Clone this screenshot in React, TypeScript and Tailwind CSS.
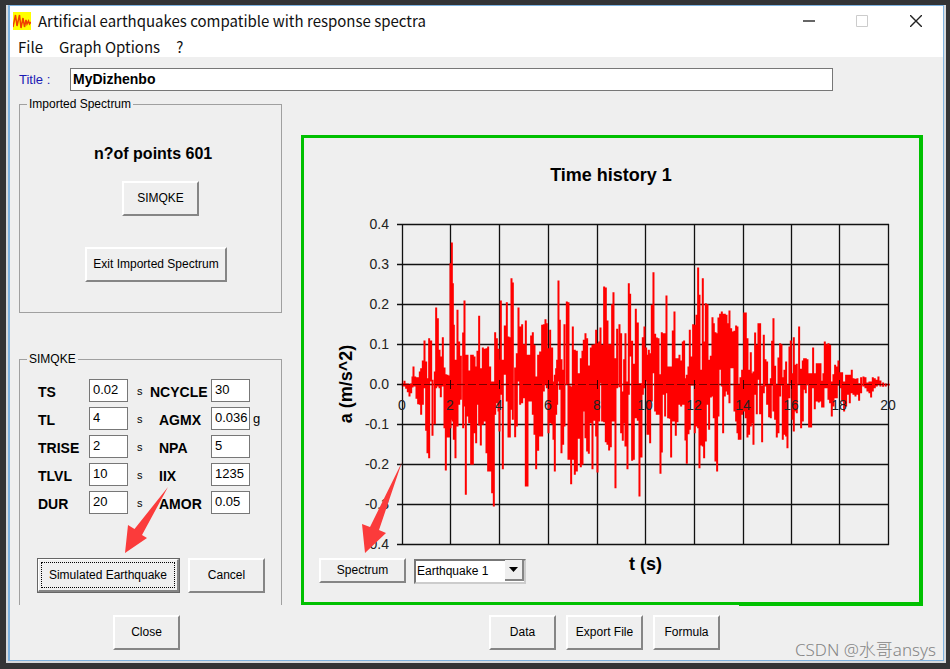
import { useState } from 'react';
import type { ButtonHTMLAttributes } from 'react';
import clsx from 'clsx';

// Recorded trace, three pen units per pixel: [x, top, bottom]. Zero acceleration is at BASELINE.
const BASELINE = 509;

const TRACE: { start: number; peaks: number[][] }[] = [
  {
    start: -37,
    peaks: [
      [38, 505, 515], [43, 498, 515], [48, 506, 522], [53, 506, 532], [58, 508, 545], [63, 506, 535], [67, 485, 518], [70, 455, 515],
      [75, 485, 515], [79, 487, 552], [84, 487, 568], [89, 470, 570], [93, 460, 600], [98, 437, 570], [103, 377, 520], [108, 440, 648],
      [112, 490, 715], [117, 370, 730], [123, 377, 500], [127, 495, 663], [134, 470, 628], [138, 278, 520], [143, 310, 515], [148, 405, 520],
      [152, 425, 547], [158, 367, 515], [163, 458, 640], [167, 478, 767], [172, 480, 668], [177, 482, 668], [181, 145, 640], [185, 83, 615],
      [188, 205, 620], [191, 330, 675], [196, 435, 730], [202, 285, 635], [207, 380, 570], [212, 423, 555], [219, 353, 640], [223, 257, 575],
      [227, 420, 840], [232, 420, 605], [237, 467, 625], [243, 420, 750], [248, 420, 750], [253, 425, 655], [258, 455, 685], [262, 408, 570],
      [267, 303, 632], [272, 460, 692], [278, 398, 630], [284, 402, 620], [289, 400, 715], [294, 395, 770], [300, 455, 770], [306, 500, 835],
      [311, 500, 875], [315, 352, 600], [320, 370, 565], [325, 402, 590], [328, 435, 650], [332, 257, 540], [338, 435, 763], [344, 332, 480],
      [350, 262, 560], [355, 365, 668], [359, 367, 668], [364, 190, 585], [368, 203, 615], [375, 458, 667], [380, 415, 635], [385, 278, 500],
      [390, 335, 570], [396, 328, 565], [401, 388, 550], [407, 317, 815], [412, 420, 815], [418, 420, 560], [423, 362, 560], [428, 352, 600],
      [433, 390, 660], [438, 485, 763], [444, 420, 708], [450, 410, 665], [456, 330, 665], [461, 328, 530], [466, 313, 510], [470, 325, 520],
      [475, 400, 655], [480, 345, 625], [486, 398, 628], [490, 500, 675], [494, 480, 770], [498, 460, 600], [501, 435, 570], [505, 197, 500],
      [509, 315, 525], [514, 433, 715], [519, 465, 690], [523, 328, 635], [530, 260, 510],
    ],
  },
  {
    start: 443,
    peaks: [
      [55, 262, 735], [59, 512, 735], [63, 515, 808], [68, 335, 735], [74, 405, 780], [80, 408, 770], [86, 475, 672], [92, 430, 757],
      [97, 408, 750], [101, 375, 590], [106, 355, 670], [111, 370, 710], [116, 452, 717], [122, 398, 625], [127, 390, 763], [133, 388, 618],
      [138, 345, 665], [142, 385, 773], [147, 380, 620], [151, 338, 505], [156, 390, 620], [162, 215, 622], [167, 218, 682], [172, 317, 690],
      [177, 388, 707], [182, 388, 697], [186, 268, 620], [190, 232, 620], [196, 430, 820], [201, 342, 520], [208, 328, 517], [213, 355, 655],
      [218, 530, 678], [222, 433, 625], [226, 355, 695], [232, 500, 763], [236, 205, 540], [240, 237, 425], [246, 378, 738], [251, 447, 735],
      [257, 282, 610], [263, 323, 618], [268, 505, 845], [274, 505, 728], [278, 367, 540], [283, 335, 520], [288, 398, 500], [292, 420, 660],
      [296, 405, 660], [300, 415, 685], [305, 270, 560], [310, 172, 475], [315, 357, 590], [320, 368, 600], [325, 370, 600], [331, 478, 777],
      [335, 352, 713], [341, 355, 540], [345, 355, 605], [349, 242, 535], [354, 455, 610], [359, 455, 612], [363, 455, 728], [368, 347, 620],
      [373, 290, 620], [377, 430, 663], [382, 430, 622], [388, 420, 570], [393, 437, 575], [398, 380, 570], [402, 377, 570], [406, 490, 677],
      [410, 480, 747], [415, 455, 658], [419, 345, 645], [424, 425, 512], [429, 328, 512], [434, 330, 655], [439, 300, 635], [444, 158, 640],
      [448, 240, 760], [453, 465, 692], [458, 190, 695], [462, 380, 730], [467, 265, 680], [472, 268, 570], [477, 435, 645], [482, 423, 548],
      [487, 307, 545], [491, 325, 610], [496, 352, 740], [501, 355, 770], [505, 308, 605], [510, 297, 465], [515, 290, 515], [519, 297, 655],
      [524, 297, 545], [529, 300, 530], [533, 325, 540],
    ],
  },
  {
    start: 953,
    peaks: [
      [28, 287, 565], [33, 340, 460], [38, 350, 460], [43, 348, 590], [48, 332, 620], [52, 335, 655], [56, 510, 675], [61, 487, 675],
      [66, 465, 600], [72, 293, 590], [77, 293, 610], [82, 370, 668], [87, 465, 660], [92, 412, 635], [96, 475, 625], [100, 470, 690],
      [105, 353, 540], [110, 390, 598], [115, 325, 495], [120, 325, 598], [126, 512, 682], [131, 360, 535], [136, 433, 515], [141, 440, 570],
      [147, 510, 607], [152, 490, 610], [156, 378, 512], [160, 310, 590], [165, 453, 615], [170, 510, 668], [175, 428, 655], [180, 385, 545],
      [184, 388, 512], [188, 487, 675], [193, 465, 660], [198, 440, 665], [202, 508, 700], [208, 395, 550], [212, 377, 505], [217, 475, 615],
      [221, 367, 650], [226, 450, 590], [230, 447, 595], [237, 335, 510], [243, 462, 640], [248, 437, 620], [252, 430, 525], [257, 430, 535],
      [262, 433, 510], [267, 475, 638], [273, 475, 638], [279, 398, 520], [284, 475, 583], [290, 445, 560], [296, 445, 563], [301, 445, 560],
      [306, 498, 578], [310, 475, 578], [314, 380, 520], [320, 388, 520], [325, 385, 555], [330, 390, 565], [335, 500, 605], [340, 478, 575],
      [345, 450, 550], [350, 455, 550], [355, 437, 512], [360, 472, 520], [366, 472, 560], [372, 500, 590], [378, 480, 575], [384, 480, 540],
      [389, 480, 565], [395, 465, 535], [400, 490, 540], [406, 492, 545], [412, 490, 540], [417, 505, 558], [423, 487, 535], [430, 485, 515],
      [436, 487, 520], [442, 503, 530], [448, 500, 535], [453, 500, 548], [458, 487, 530], [464, 490, 520], [470, 495, 515], [475, 485, 510],
      [481, 497, 515], [489, 503, 516], [497, 506, 515], [506, 507, 512],
    ],
  },
];

const TRACE_PATH = TRACE.flatMap(({ start, peaks }) =>
  peaks.map(([x, top, bottom]) => `M${x + start} ${top - BASELINE}V${bottom - BASELINE}`)
).join('');

const Y_LABELS = ['0.4', '0.3', '0.2', '0.1', '0.0', '-0.1', '-0.2', '-0.3', '-0.4'];
const X_LINES = [98, 146, 195, 244, 293, 341, 390, 439, 487, 535, 584];

const FIELDS = [
  { left: ['TS', '0.02'], right: ['NCYCLE', '30'], unit: '' },
  { left: ['TL', '4'], right: ['AGMX', '0.036'], unit: 'g' },
  { left: ['TRISE', '2'], right: ['NPA', '5'], unit: '' },
  { left: ['TLVL', '10'], right: ['IIX', '1235'], unit: '' },
  { left: ['DUR', '20'], right: ['AMOR', '0.05'], unit: '' },
];

function Button({ className, children, ...props }: ButtonHTMLAttributes<HTMLButtonElement>) {
  return (
    <button
      className={clsx(
        'h-[35px] border-2 border-t-white border-l-white border-r-[#858585] border-b-[#858585] bg-[#efefef] pb-[2px] text-xs whitespace-nowrap text-black',
        className
      )}
      {...props}
    >
      {children}
    </button>
  );
}

function NumberBox({ id, value }: { id: string; value: string }) {
  return (
    <input
      id={id}
      defaultValue={value}
      className="h-[23px] w-full border border-[#777] bg-white pb-[2px] pl-[3px] text-[13px] leading-4 outline-none"
    />
  );
}

function TitleBar() {
  return (
    <header className="bg-white font-['Noto_Sans_CJK_SC','Noto_Sans',sans-serif] text-[#111]">
      <div className="flex h-[30px] items-center pl-[3px]">
        <svg className="h-[18px] w-[18px] bg-[#ffff00]" viewBox="0 0 18 18" fill="none" stroke="#f04000" strokeWidth="1.5">
          <path d="M0 15L2.500 3L4 14L6.500 3L8 16L10 6L11.500 15L13 8L14 12L15.500 9L16.500 12L18 10" />
        </svg>
        <h1 className="ml-[7px] flex-1 text-[15px] leading-5">Artificial earthquakes compatible with response spectra</h1>
        <button aria-label="Minimize" className="flex h-full w-[53px] items-center justify-center">
          <svg width="12" height="12" stroke="#333" strokeWidth="1.5"><path d="M0 6H12" /></svg>
        </button>
        <button aria-label="Maximize" disabled className="flex h-full w-[53px] items-center justify-center">
          <svg width="12" height="12" fill="none" stroke="#ccc"><path d="M.5 .5H11.500V11.500H.5Z" /></svg>
        </button>
        <button aria-label="Close window" className="flex h-full w-[55px] items-center justify-center">
          <svg width="12" height="12" stroke="#222" strokeWidth="1.4"><path d="M0 0L12 12M12 0L0 12" /></svg>
        </button>
      </div>
      <nav className="flex h-[21px] items-center gap-4 pl-2 text-[15px] leading-5">
        <button>File</button>
        <button>Graph Options</button>
        <button>?</button>
      </nav>
    </header>
  );
}

function ImportedSpectrum() {
  return (
    <fieldset className="h-[217px] border border-[#a0a0a0]">
      <legend className="ml-[7px] px-[2px] text-xs leading-4">Imported Spectrum</legend>
      <div className="flex flex-col items-start pt-8">
        <p className="ml-[74px] text-[16px] leading-5 font-bold">n?of points 601</p>
        <Button className="mt-[17px] ml-[102px] w-[77px]">SIMQKE</Button>
        <Button className="mt-[31px] ml-[65px] w-[142px]">Exit Imported Spectrum</Button>
      </div>
    </fieldset>
  );
}

function Simqke() {
  return (
    <fieldset className="relative mt-[38px] h-[254px] border border-b-0 border-[#a0a0a0]">
      <legend className="ml-[7px] px-[2px] text-xs leading-4">SIMQKE</legend>
      <div className="flex flex-col gap-[5px] pt-3 pl-[18px]">
        {FIELDS.map(({ left, right, unit }) => (
          <div key={left[0]} className="grid h-[23px] grid-cols-[51px_39px_22px_61px_39px_1fr] items-center">
            <label htmlFor={left[0]} className="self-end text-[14px] leading-5 font-bold">{left[0]}</label>
            <NumberBox id={left[0]} value={left[1]} />
            <span className="pl-[9px] text-[11px] leading-4">s</span>
            <label
              htmlFor={right[0]}
              className={clsx('self-end text-[14px] leading-5 font-bold', right[0] !== 'NCYCLE' && 'pl-[9px]')}
            >
              {right[0]}
            </label>
            <NumberBox id={right[0]} value={right[1]} />
            <span className="pl-[3px] text-[13px] leading-4">{unit}</span>
          </div>
        ))}
      </div>
      <div className="mt-11 ml-[17px] flex gap-2">
        <button className="h-[35px] w-[143px] border border-[#666] bg-[#efefef] text-xs whitespace-nowrap">
          <span className="flex h-full items-center justify-center border-t border-r-2 border-b-2 border-l border-t-white border-r-[#858585] border-b-[#858585] border-l-white p-[2px]">
            <span className="flex h-full w-full items-center justify-center border border-dotted border-black">
              Simulated Earthquake
            </span>
          </span>
        </button>
        <Button className="w-[77px]">Cancel</Button>
      </div>
      <svg className="pointer-events-none absolute top-[119px] left-[105px]" width="44" height="68" viewBox="0 0 44 68" fill="#fb3b3b">
        <path d="M43 1L9.500 43L3 39L0 67L22 52L17 49Z" />
      </svg>
    </fieldset>
  );
}

function TimeHistory() {
  const [quake, setQuake] = useState('1');

  return (
    <section className="relative mt-[39px] h-[470px] border-3 border-r-4 border-[#00c000]">
      <svg className="block w-full" viewBox="0 0 615 418" fontFamily="Liberation Sans, sans-serif" fontSize="14">
        <text x="307" y="43" textAnchor="middle" fontSize="18" fontWeight="bold">Time history {quake}</text>
        <text x="48" y="246" textAnchor="middle" fontSize="18" fontWeight="bold" transform="rotate(-90 48 246)">a (m/s^2)</text>
        <g stroke="#111" strokeWidth="1.300">
          {Y_LABELS.map((label, i) => (
            <path key={label} d={`M93 ${86.5 + i * 40}H585`} />
          ))}
          {X_LINES.map((x) => (
            <path key={x} d={`M${x + 0.5} 86V407`} />
          ))}
        </g>
        <g transform="translate(98.500 246.500) scale(.3333)">
          <path d={TRACE_PATH} stroke="#ff0000" strokeWidth="6" />
        </g>
        <path d="M98 246.500H585" stroke="#7a0000" strokeDasharray="8 3" />
        {X_LINES.map((x) => (
          <path key={x} d={`M${x + 0.5} 242V251`} stroke="#300" />
        ))}
        {Y_LABELS.map((label, i) => (
          <text key={label} x="85" y={91 + i * 40} textAnchor="end" fill="#222">{label}</text>
        ))}
        {X_LINES.map((x, i) => (
          <text key={x} x={x} y="272" textAnchor="middle" fill="#222">{i * 2}</text>
        ))}
      </svg>
      <div className="flex items-start pt-[2px] pl-[15px]">
        <button className="h-[25px] w-[87px] border-2 border-t-white border-r-[#858585] border-b-[#858585] border-l-white bg-[#efefef] pb-[2px] text-xs">
          Spectrum
        </button>
        <div className="relative ml-2">
          <select
            aria-label="Earthquake"
            value={quake}
            onChange={(e) => setQuake(e.target.value)}
            className="h-[25px] w-[112px] appearance-none border-2 border-t-[#777] border-r-[#ccc] border-b-[#ccc] border-l-[#777] bg-white pb-px pl-px text-xs outline-none"
          >
            <option value="1">Earthquake 1</option>
            <option value="2">Earthquake 2</option>
          </select>
          <span className="pointer-events-none absolute top-[2px] right-[2px] flex h-[21px] w-[19px] items-center justify-center border-r-2 border-b-2 border-[#858585] bg-[#efefef]">
            <svg width="9" height="5"><path d="M0 0H9L4.500 5Z" /></svg>
          </span>
        </div>
        <span className="ml-[103px] text-[18px] leading-3 font-bold">t (s)</span>
      </div>
      {/* heavier end of the frame's bottom edge */}
      <div className="absolute -right-1 -bottom-1 h-1 w-[30%] bg-[#00c000]" />
      <svg className="pointer-events-none absolute top-[324px] left-[58px]" width="41" height="92" viewBox="0 0 41 92" fill="#fb3b3b">
        <path d="M40 0L8 65L0 62L3 91L24 71L17 68Z" />
      </svg>
    </section>
  );
}

export default function App() {
  return (
    <div className="relative flex min-h-screen bg-[#333436] pt-[5px] pr-1 pb-[6px] pl-[6px] font-['Liberation_Sans',sans-serif] text-black">
      <div className="flex flex-1 bg-[#d6d9dc] pr-[2px] pb-[2px] pl-[2px]">
        <div className="flex flex-1 flex-col border border-l-2 border-[#7db2e0] bg-[#efefef]">
          <TitleBar />
          <main className="flex flex-1 flex-col pt-[11px] pr-5 pl-[9px]">
            <div className="flex h-[23px] items-center">
              <label htmlFor="title" className="w-[51px] text-[13px] text-[#1a1ab4]">Title :</label>
              <input
                id="title"
                defaultValue="MyDizhenbo"
                className="mr-[90px] h-full min-w-0 flex-1 border border-[#777] bg-white pb-[2px] pl-[2px] text-[14px] font-bold outline-none"
              />
            </div>
            <div className="mt-[5px] grid grid-cols-[263px_1fr] gap-x-[19px] gap-y-[10px]">
              <div>
                <ImportedSpectrum />
                <Simqke />
              </div>
              <TimeHistory />
              <div className="pl-[94px]">
                <Button className="w-[67px]">Close</Button>
              </div>
              <div className="flex gap-[10px] pl-[188px]">
                <Button className="w-[67px]">Data</Button>
                <Button className="w-[77px]">Export File</Button>
                <Button className="w-[67px]">Formula</Button>
              </div>
            </div>
          </main>
        </div>
      </div>
      <span className="absolute right-[14px] bottom-[7px] font-['Noto_Sans','Noto_Sans_CJK_SC',sans-serif] text-[17px] leading-6 font-light text-[#858585]">
        CSDN @水哥ansys
      </span>
    </div>
  );
}
